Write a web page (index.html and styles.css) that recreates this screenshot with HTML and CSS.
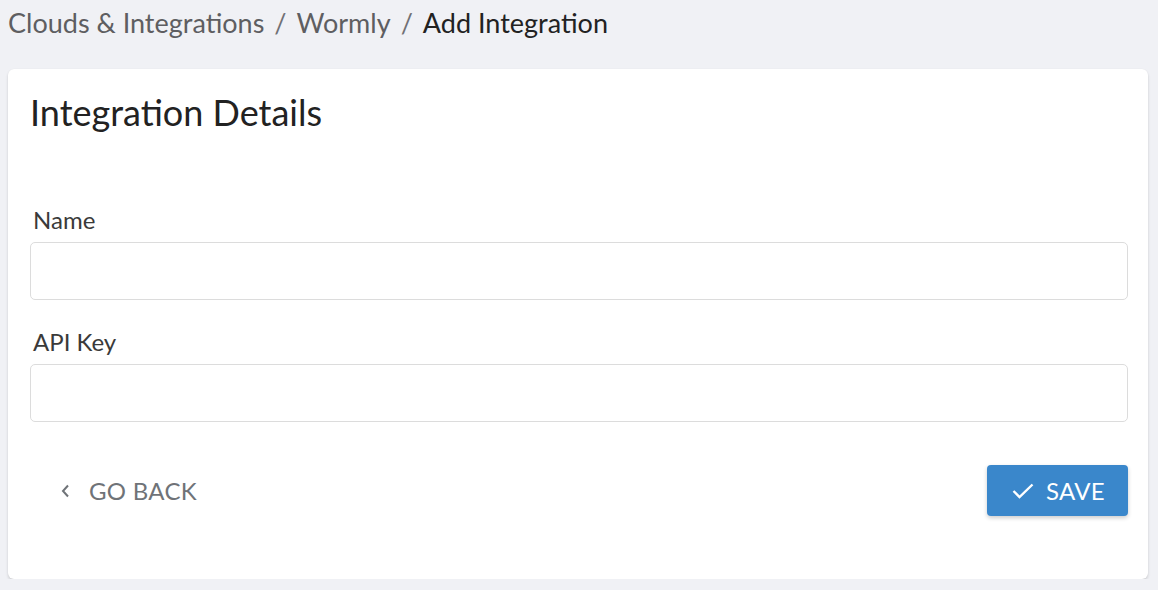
FILE: index.html
```html
<!DOCTYPE html>
<html>
<head>
<meta charset="utf-8">
<link rel="stylesheet" href="styles.css">
</head>
<body>
<nav class="crumbs">
  <span class="crumb">Clouds &amp; Integrations</span>
  <span class="sep">/</span>
  <span class="crumb">Wormly</span>
  <span class="sep">/</span>
  <span class="crumb current">Add Integration</span>
</nav>
<main class="card">
  <h1 class="title">Integration Details</h1>
  <form class="form">
    <label class="field">
      <span class="label">Name</span>
      <input class="input" type="text">
    </label>
    <label class="field">
      <span class="label">API Key</span>
      <input class="input" type="text">
    </label>
    <div class="actions">
      <button type="button" class="back">
        <svg class="chev" width="9" height="14" viewBox="0 0 9 14"><path d="M7 1.5 L2 7 L7 12.5" fill="none" stroke="currentColor" stroke-width="2"/></svg>
        GO BACK
      </button>
      <button type="button" class="save">
        <svg class="check" width="22" height="16" viewBox="0 0 22 16"><path d="M1.5 8 L7.5 14 L20.5 1.5" fill="none" stroke="currentColor" stroke-width="2.4"/></svg>
        SAVE
      </button>
    </div>
  </form>
</main>
</body>
</html>
```
FILE: styles.css
```css
html, body {
  margin: 0;
  background: #f0f1f5;
}
body {
  padding: 0 10px 0 8px;
  font-family: Lato, "Open Sans", sans-serif;
  color: #222;
}
.crumbs {
  display: flex;
  align-items: baseline;
  gap: 10px;
  font-size: 27px;
  line-height: 46px;
  color: #5e5e61;
}
.crumb.current {
  color: #222;
}
.sep {
  color: #707074;
}
.card {
  margin-top: 23px;
  background: #fff;
  border-radius: 6px;
  box-shadow: 0 2px 3px rgba(0,0,0,0.14), 0 0 1px rgba(0,0,0,0.08);
  padding: 21px 20px 63px 22px;
}
.title {
  margin: 0;
  font-weight: 400;
  font-size: 36px;
  line-height: 44px;
  color: #222;
}
.form {
  margin-top: 71px;
  display: flex;
  flex-direction: column;
}
.field {
  display: flex;
  flex-direction: column;
  margin-bottom: 27px;
}
.label {
  font-size: 24px;
  line-height: 29px;
  color: #3a3a3a;
  padding-left: 3px;
  margin-bottom: 8px;
}
.input {
  height: 58px;
  box-sizing: border-box;
  border: 1px solid #dcdcdc;
  border-radius: 5px;
  font: inherit;
  padding: 0 12px;
}
.actions {
  display: flex;
  justify-content: space-between;
  align-items: center;
  margin-top: 16px;
}
.back {
  display: flex;
  align-items: center;
  gap: 19px;
  border: none;
  background: none;
  font-family: inherit;
  font-size: 24px;
  letter-spacing: 0.3px;
  color: #6f7378;
  padding: 0 0 0 31px;
}
.save {
  display: flex;
  align-items: center;
  gap: 12px;
  height: 51px;
  padding: 0 23px 0 25px;
  border: none;
  border-radius: 4px;
  background: #3a87cb;
  color: #fff;
  font-family: inherit;
  font-size: 24px;
  letter-spacing: 0.3px;
  box-shadow: 0 2px 4px rgba(0,0,0,0.2);
}
```
